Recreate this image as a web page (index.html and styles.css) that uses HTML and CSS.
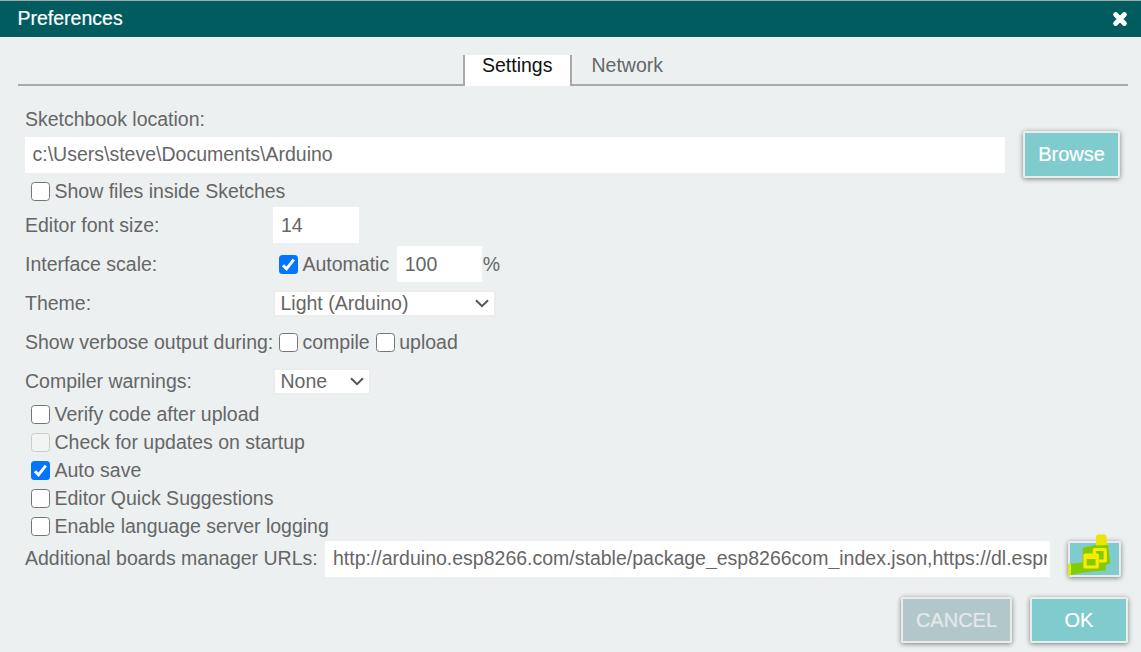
FILE: index.html
```html
<!DOCTYPE html>
<html lang="en">
<head>
<meta charset="utf-8">
<title>Preferences</title>
<link rel="stylesheet" href="styles.css">
</head>
<body>
<div class="dialog">
  <header class="titlebar">
    <span>Preferences</span>
    <svg class="close" width="16" height="16" viewBox="0 0 16 16"><path d="M3.600 3.600 12.400 12.400M12.400 3.600 3.600 12.400" stroke="#fff" stroke-width="4.900" stroke-linecap="round"/></svg>
  </header>
  <nav class="tabs">
    <div class="tab-line tab-line-left"></div>
    <div class="tab tab-active">Settings</div>
    <div class="tab-rest"><div class="tab">Network</div></div>
  </nav>
  <main class="settings">
    <div class="row location-label">Sketchbook location:</div>
    <div class="row location">
      <div class="input grow">c:\Users\steve\Documents\Arduino</div>
      <button class="button browse">Browse</button>
    </div>
    <div class="check-row first-check"><span class="box"></span>Show files inside Sketches</div>
    <div class="fields">
      <div class="row"><span class="label">Editor font size:</span><div class="input number size">14</div></div>
      <div class="row"><span class="label">Interface scale:</span><span class="box checked"><svg viewBox="0 0 19 19"><path d="M4 10.2 7.5 13.8 14.8 4.7" fill="none" stroke="#fff" stroke-width="2.9"/></svg></span><span class="automatic">Automatic</span><div class="input number scale">100</div><span class="percent">%</span></div>
      <div class="row"><span class="label">Theme:</span><div class="select theme">Light (Arduino)<svg width="14" height="9" viewBox="0 0 14 9"><path d="M1 1.200 7 7.200 13 1.200" fill="none" stroke="#555" stroke-width="2"/></svg></div></div>
      <div class="row"><span class="label">Show verbose output during:</span><span class="box"></span><span class="compile">compile</span><span class="box"></span>upload</div>
      <div class="row"><span class="label">Compiler warnings:</span><div class="select warnings">None<svg width="14" height="9" viewBox="0 0 14 9"><path d="M1 1.200 7 7.200 13 1.200" fill="none" stroke="#555" stroke-width="2"/></svg></div></div>
    </div>
    <div class="checks">
      <div class="check-row"><span class="box"></span>Verify code after upload</div>
      <div class="check-row"><span class="box disabled"></span>Check for updates on startup</div>
      <div class="check-row"><span class="box checked"><svg viewBox="0 0 19 19"><path d="M4 10.2 7.5 13.8 14.8 4.7" fill="none" stroke="#fff" stroke-width="2.9"/></svg></span>Auto save</div>
      <div class="check-row"><span class="box"></span>Editor Quick Suggestions</div>
      <div class="check-row"><span class="box"></span>Enable language server logging</div>
    </div>
    <div class="row urls">
      <span class="urls-label">Additional boards manager URLs:</span>
      <div class="input url-input"><span class="clip">http://arduino.esp8266.com/stable/package_esp8266com_index.json,https://dl.espr</span></div>
      <button class="button expand" aria-label="Edit URLs">
        <svg class="marker" width="54" height="46" viewBox="0 0 54 46">
          <path d="M14.700 13Q27 9 40 9.500L42.200 27V28.500L37.700 30V35.500Q20 36 0.300 40.500V29L14.700 27.500Z" fill="#80cc00"/>
          <path d="M28 10.500V2Q28-.5 31-.5H35.500Q38.500-.5 38.500 2V6L40 10Z" fill="#e9e600"/>
          <path d="M.3 29H3V39.800L.3 40.500Z" fill="#e4f000"/>
          <path d="M26.500 19V14.500H37.200V26H31" fill="none" stroke="#ffe900" stroke-width="3.200" stroke-linejoin="round"/>
          <path d="M17 20H29.200V32H17Z" fill="none" stroke="#ffe900" stroke-width="3.200" stroke-linejoin="round"/>
          <path d="M16 21.500H30.500" stroke="#ffe900" stroke-width="5"/>
        </svg>
      </button>
    </div>
  </main>
  <footer class="actions">
    <button class="button cancel">CANCEL</button>
    <button class="button ok">OK</button>
  </footer>
</div>
</body>
</html>
```
FILE: styles.css
```css
* { box-sizing: border-box; }
body { margin: 0; }
.dialog {
  width: 1141px;
  height: 652px;
  overflow: hidden;
  background: #ecf0f1;
  border-top: 1px solid #a5aaa9;
  color: #666;
  font: 19.5px/22px "Liberation Sans", Arial, sans-serif;
  white-space: nowrap;
}
.titlebar {
  display: flex;
  justify-content: space-between;
  height: 36px;
  padding: 6px 13px 0 17.5px;
  background: #005c5f;
  color: #fff;
}
.titlebar span { -webkit-text-stroke: .2px #fff; }
.close { margin-top: 4px; }
.tabs { display: flex; height: 31px; margin: 18px 13px 0 18px; line-height: 20px; }
.tab-line { border-bottom: 2px solid #a9a9a9; }
.tab-line-left { width: 445px; }
.tab { padding: 0 17px; }
.tab-active {
  width: 109px;
  background: #fff;
  color: #111;
  border: solid #a9a9a9;
  border-width: 0 2px;
}
.tab-rest { flex: 1; border-bottom: 2px solid #a9a9a9; padding-left: 2.5px; }
.settings { padding: 15px 21px 0 25px; }
.row { display: flex; align-items: center; height: 36px; }
.input {
  height: 36px;
  padding: 6px 3px 0 7.5px;
  background: #fff;
}
.number { padding-top: 7px; padding-left: 8px; }
.grow { width: 980px; }
.button {
  padding: 0;
  border: 2px solid #ecebec;
  border-radius: 2px;
  background: #7fcbcd;
  box-shadow: 0 1px 5px rgba(0, 0, 0, .48);
  color: #fff;
  font: inherit;
  font-size: 20px;
  -webkit-text-stroke: .2px currentColor;
}
.browse { width: 97px; height: 47px; margin: -1px 0 0 18px; padding-bottom: 1px; flex: none; }
.first-check { margin-top: 4px; }
.check-row { display: flex; align-items: center; height: 28px; padding-left: 6px; }
.box {
  flex: none;
  width: 19px;
  height: 19px;
  margin-right: 4.5px;
  border: 1px solid #767676;
  border-radius: 3.5px;
  background: #fff;
}
.checked { border: 0; background: #0075ff; }
.checked svg { display: block; }
.disabled { border-color: #cbcdcd; background: #f2f4f4; }
.fields { display: grid; gap: 3px; margin-top: 2px; }
.label { width: 248px; }
.size { width: 86px; }
.label + .box { margin-left: 6px; }
.automatic { margin-right: 7.5px; }
.scale { width: 85px; }
.percent { margin-left: 1px; }
.select {
  display: flex;
  align-items: center;
  justify-content: space-between;
  height: 27px;
  border: 2px solid #ececec;
  background: #fff;
  padding: 0 5px 0 5.5px;
}
.theme { width: 223px; }
.warnings { width: 98px; }
.compile { margin-right: 6px; }
.checks { margin-top: 1px; }
.urls { margin-top: 1px; }
.urls-label { width: 300px; flex: none; padding-bottom: 2px; }
.url-input { width: 725px; flex: none; padding-left: 8px; }
.clip { display: block; overflow: hidden; }
.expand { position: relative; width: 53px; height: 36px; flex: none; margin-left: 17.5px; }
.marker { position: absolute; left: -2px; top: -8px; overflow: visible; }
.actions { display: flex; justify-content: flex-end; gap: 18px; padding: 20px 13px 0 0; }
.actions .button { height: 46px; }
.cancel { width: 111px; background: #b2c7c9; color: #e4e9ea; }
.ok { width: 98px; }
```
